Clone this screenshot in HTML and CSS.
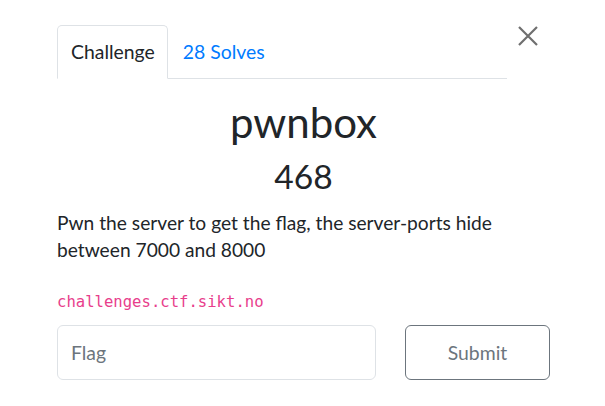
FILE: index.html
```html
<!DOCTYPE html>
<html>
<head>
<meta charset="utf-8">
<link rel="stylesheet" href="styles.css">
</head>
<body>
<div class="modal">
  <div class="header">
    <ul class="tabs">
      <li class="tab active">Challenge</li>
      <li class="tab link">28 Solves</li>
    </ul>
    <button class="close" aria-label="Close">
      <svg width="20" height="20" viewBox="0 0 20 20"><path d="M1 1 L19 19 M19 1 L1 19" stroke="#6f6f6f" stroke-width="2.2" fill="none"/></svg>
    </button>
  </div>
  <h2 class="title">pwnbox</h2>
  <h3 class="value">468</h3>
  <p class="desc">Pwn the server to get the flag, the server-ports hide between 7000 and 8000</p>
  <code class="host">challenges.ctf.sikt.no</code>
  <form class="submit-row">
    <input class="flag" type="text" placeholder="Flag">
    <button class="btn" type="button">Submit</button>
  </form>
</div>
</body>
</html>
```
FILE: styles.css
```css
html, body {
  margin: 0;
  padding: 0;
  background: #fff;
}
body {
  font-family: Lato, "Noto Sans", sans-serif;
  color: #212529;
}
.modal {
  padding: 25px 0 0 57px;
  width: 493px;
}
.header {
  display: flex;
  align-items: flex-start;
}
.tabs {
  list-style: none;
  margin: 0;
  padding: 0;
  width: 450px;
  display: flex;
  border-bottom: 1px solid #dee2e6;
}
.tab {
  font-size: 19.4px;
  line-height: 28px;
  padding: 12px 12px 12px 13px;
  border: 1px solid transparent;
  border-radius: 5px 5px 0 0;
  margin-bottom: -1px;
}
.tab.active {
  border-color: #dee2e6 #dee2e6 #fff;
  color: #212529;
  background: #fff;
}
.tab.link {
  color: #007bff;
  padding-left: 14px;
}
.close {
  margin: 1px 0 0 11px;
  padding: 0;
  border: 0;
  background: none;
  width: 20px;
  height: 20px;
  display: block;
}
.close svg {
  display: block;
}
.title {
  margin: 17.5px 0 0;
  font-size: 42px;
  line-height: 50.4px;
  font-weight: 400;
  text-align: center;
}
.value {
  margin: 9px 0 0;
  font-size: 33.6px;
  line-height: 40.3px;
  font-weight: 400;
  text-align: center;
}
.desc {
  margin: 13px 0 0;
  font-size: 19.2px;
  line-height: 27px;
}
.host {
  display: block;
  margin-top: 27.5px;
  font-family: "DejaVu Sans Mono", monospace;
  font-size: 15.6px;
  line-height: 22px;
  color: #e83e8c;
}
.submit-row {
  display: flex;
  margin: 12.4px 0 0;
  gap: 29px;
}
.flag {
  box-sizing: border-box;
  width: 319px;
  height: 55px;
  border: 1px solid #dee2e6;
  border-radius: 6px;
  padding: 0 13px;
  font-family: Lato, sans-serif;
  font-size: 19.4px;
  color: #495057;
  outline: none;
}
.flag::placeholder {
  color: #6c757d;
  opacity: 1;
}
.btn {
  box-sizing: border-box;
  width: 145px;
  height: 55px;
  border: 1px solid #6c757d;
  border-radius: 6px;
  background: #fff;
  color: #6c757d;
  font-family: Lato, sans-serif;
  font-size: 19.4px;
}
```
